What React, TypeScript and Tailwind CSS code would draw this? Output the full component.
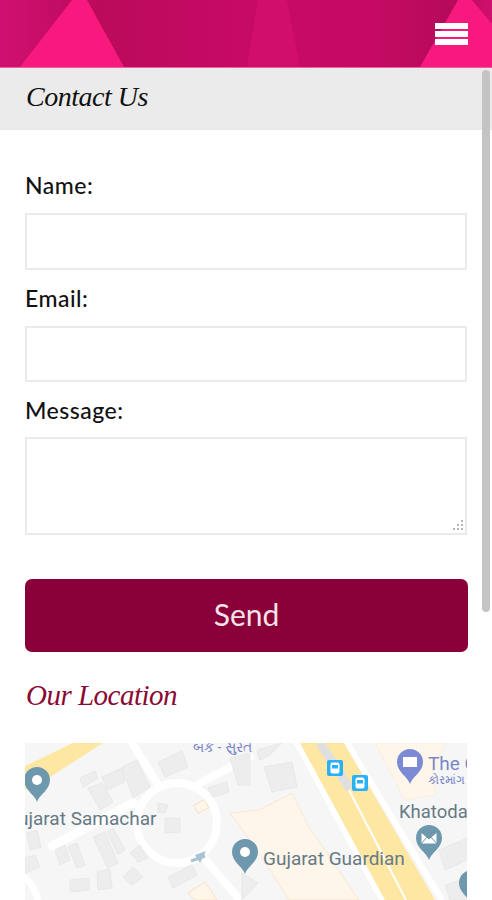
import React from 'react';

const buildings = [
  '158,762 182,751 188,767 165,777',
  '80,778 95,771 98,778 83,787',
  '102,777 122,768 125,782 107,790',
  '122,767 137,760 150,787 133,798',
  '88,788 102,783 113,802 100,810',
  '93,837 105,832 118,863 108,868',
  '107,832 113,828 125,850 118,855',
  '55,850 65,845 70,860 60,865',
  '68,847 77,843 85,865 77,868',
  '27,833 37,830 41,847 30,850',
  '25,858 35,855 40,867 25,873',
  '70,880 89,878 89,890 70,892',
  '97,872 110,869 112,888 98,890',
  '123,877 133,867 143,877 132,885',
  '130,853 140,845 148,858 138,862',
  '168,877 192,865 197,875 173,888',
  '208,788 227,782 229,792 213,797',
  '165,818 180,818 180,832 165,833',
  '158,803 168,805 165,813 158,812',
  '230,758 250,753 250,785 238,785',
  '264,767 292,762 297,787 272,792',
  '257,750 282,743 270,755 260,760',
  '242,873 258,883 242,900',
  '439,850 467,838 467,860 445,870',
  '445,885 467,878 467,900 450,900',
];

// Map pin, drawn around its head centre
function Pin({ x, y, color }: { x: number; y: number; color: string }) {
  return (
    <g transform={`translate(${x} ${y})`}>
      <path
        d="M0 22 C-2 15 -13 10 -13 0 A13 13 0 1 1 13 0 C13 10 2 15 0 22 Z"
        fill={color}
      />
    </g>
  );
}

function BusStop({ x, y }: { x: number; y: number }) {
  return (
    <g transform={`translate(${x} ${y})`}>
      <rect x="-8" y="-8" width="16" height="16" rx="2" fill="#29b0f6" />
      <rect x="-4.5" y="-5.5" width="9" height="11" rx="2" fill="#fff" />
      <rect x="-3" y="-3" width="6" height="3.5" fill="#29b0f6" />
    </g>
  );
}

function LocationMap() {
  return (
    <svg viewBox="25 743 442 157" className="block h-[157px] w-full bg-[#f6f6f6]">
      {/* parcels */}
      <polygon points="230,813 259,810 292,793 309,827 359,900 289,900 270,870 250,840" fill="#fef6ea" stroke="#fbe6d0" />
      <polygon points="375,743 445,743 432,775 436,795 405,800 392,775" fill="#fef6ea" stroke="#fbeedd" />
      <rect x="195" y="802" width="12" height="9" transform="rotate(-30 201 806)" fill="#fef6ea" stroke="#fbe0c0" />
      <polygon points="188,893 205,882 217,900 195,900" fill="#fef6ea" stroke="#fbe0c0" />

      {/* streets */}
      <g fill="none" stroke="#ffffff" strokeLinecap="round">
        <path d="M52 846 L133 803" strokeWidth="9" />
        <path d="M132 743 L157 783" strokeWidth="8" />
        <path d="M200 783 L250 757" strokeWidth="8" />
        <path d="M203 857 L240 900" strokeWidth="8" />
        <path d="M297 743 L382 900" strokeWidth="6" />
        <path d="M347 743 L442 900" strokeWidth="6" />
        <path d="M25 878 C32 884 36 892 38 900" strokeWidth="7" />
        <circle cx="177" cy="823" r="40" strokeWidth="8" />
      </g>

      {buildings.map((points) => (
        <polygon key={points} points={points} fill="#ededed" stroke="#e8e8e8" />
      ))}

      {/* main roads */}
      <polygon points="25,766 73,743 103,743 50,777 25,790" fill="#fde7a3" />
      <polygon points="300,743 344,743 435,900 385,900" fill="#fde7a3" />
      <path d="M320 743 L350 789" stroke="#dfdfdf" strokeWidth="9" />
      <path d="M349 790 L406 900" stroke="#ffffff" strokeWidth="2" />
      <path d="M205 856 L191 861" stroke="#a9c3d6" strokeWidth="3" />
      <polygon points="206,851 200,863 195,855" fill="#a9c3d6" />

      <Pin x={37} y={780} color="#6d98ae" />
      <circle cx="37" cy="780" r="5" fill="#fff" />
      <Pin x={245} y={852} color="#6d98ae" />
      <circle cx="245" cy="852" r="5" fill="#fff" />
      <Pin x={410} y={762} color="#7c89d4" />
      <rect x="403" y="757" width="14" height="10" fill="#fff" />
      <Pin x={429} y={838} color="#6d98ae" />
      <path d="M421 832 H437 V844 H421 Z M421 832 L429 839 L437 832 M421 844 L427 837 M437 844 L431 837" fill="#fff" stroke="#6d98ae" />
      <Pin x={472} y={883} color="#6d98ae" />

      <BusStop x={335} y={768} />
      <BusStop x={360} y={783} />

      <g fontFamily="Roboto, sans-serif" fill="#667a85">
        <text x="5" y="825" fontSize="19">Gujarat Samachar</text>
        <text x="263" y="865" fontSize="19">Gujarat Guardian</text>
        <text x="399" y="818" fontSize="18.5">Khatoda</text>
      </g>
      <g fontFamily="Roboto, 'Noto Sans', sans-serif" fill="#7a86c8">
        <text x="428" y="770" fontSize="19">The C</text>
        <text x="428" y="784" fontSize="12">કોરમાંગ</text>
        <text x="193" y="752" fontSize="14">બંક - સુરત</text>
      </g>
    </svg>
  );
}

export default function App() {
  return (
    <div className="relative h-[900px] overflow-hidden bg-white font-['Lato',sans-serif] text-[#111]">
      {/* Header */}
      <header className="relative flex h-[68px] items-center justify-end border-b border-[#ee5f9c] bg-[#c10a62] pr-6">
        <svg viewBox="0 0 492 67" className="absolute inset-0 h-full w-full">
          <defs>
            <linearGradient id="band" x1="0" x2="1" y1="0" y2="0">
              <stop offset="0" stopColor="#d01070" />
              <stop offset="0.2" stopColor="#bb0a5c" />
              <stop offset="0.5" stopColor="#c70a66" />
              <stop offset="0.75" stopColor="#c60a64" />
              <stop offset="0.92" stopColor="#b60a5b" />
              <stop offset="1" stopColor="#d0106e" />
            </linearGradient>
          </defs>
          <rect width="492" height="67" fill="url(#band)" />
          <polygon points="258,0 287,0 300,67 247,67" fill="#d20e6d" />
          <polygon points="72,0 87,0 124,67 20,67" fill="#f8197f" />
          <polygon points="458,0 472,0 492,24 492,67 420,67" fill="#f8197f" />
        </svg>
        <div className="relative flex w-[33px] flex-col gap-[2px]">
          <span className="h-[6px] bg-white" />
          <span className="h-[6px] bg-white" />
          <span className="h-[6px] bg-white" />
        </div>
      </header>

      {/* Title */}
      <div className="flex h-[62px] items-center bg-[#ebebeb] pb-[5px] pl-[26px]">
        <h1 className="font-['Liberation_Serif',serif] text-[28px] leading-none tracking-[-0.5px] italic">
          Contact Us
        </h1>
      </div>

      {/* Form */}
      <form className="flex flex-col px-[25px] pt-[42px]">
        <label className="text-[23px] leading-[27px] font-medium tracking-[0.5px]">Name:</label>
        <input className="mt-[14px] h-[57px] w-[442px] border-2 border-[#ebebeb]" type="text" />
        <label className="mt-[15px] text-[23px] leading-[27px] font-medium tracking-[0.5px]">Email:</label>
        <input className="mt-[14px] h-[56px] w-[442px] border-2 border-[#ebebeb]" type="text" />
        <label className="mt-[15px] text-[23px] leading-[27px] font-medium tracking-[0.5px]">Message:</label>
        <div className="relative mt-[13px] h-[98px] w-[442px]">
          <textarea className="block h-full w-full resize-none border-2 border-[#ebebeb]" />
          <svg viewBox="0 0 12 12" className="absolute right-[3px] bottom-[3px] h-3 w-3" fill="#b5b5b5">
            <rect x="9" y="0" width="2" height="2" />
            <rect x="5" y="4" width="2" height="2" />
            <rect x="9" y="4" width="2" height="2" />
            <rect x="1" y="8" width="2" height="2" />
            <rect x="5" y="8" width="2" height="2" />
            <rect x="9" y="8" width="2" height="2" />
          </svg>
        </div>
        <button
          type="button"
          className="mt-[44px] h-[73px] w-[443px] rounded-[7px] bg-[#8a0038] pb-[3px] text-[30px] text-[#f5e3e8]"
        >
          Send
        </button>
      </form>

      {/* Location */}
      <section className="px-[25px]">
        <h2 className="mt-[25px] h-[66px] pl-px font-['Liberation_Serif',serif] text-[29px] leading-[36px] tracking-[-0.5px] text-[#8a0a35] italic">
          Our Location
        </h2>
        <LocationMap />
      </section>

      {/* Scrollbar */}
      <div className="absolute top-[70px] right-[2px] h-[542px] w-2 rounded-full bg-[#c4c4c4]" />
    </div>
  );
}
